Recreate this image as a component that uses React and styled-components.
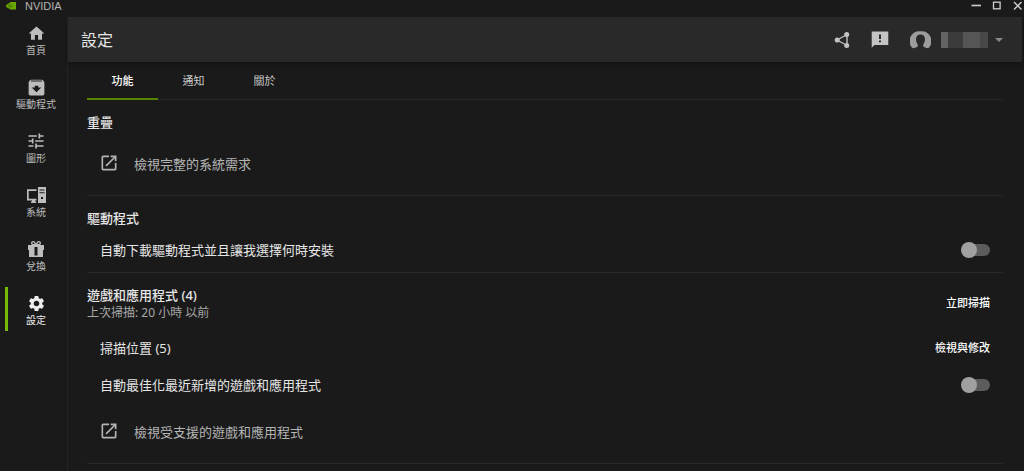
import React from "react";
import styled, { createGlobalStyle } from "styled-components";
import { MdArchive, MdHome, MdOpenInNew, MdSettings, MdTune } from "react-icons/md";

const GlobalStyle = createGlobalStyle`
    * {
        box-sizing: border-box;
    }
    body {
        margin: 0;
        background: #1a1a1a;
        color: #e6e6e6;
        font-family: "Noto Sans", "Noto Sans CJK TC", sans-serif;
        font-size: 13px;
    }
    button {
        border: 0;
        padding: 0;
        background: none;
        color: inherit;
        font: inherit;
        cursor: pointer;
    }
    h1, h2, p {
        margin: 0;
    }
    svg {
        display: block;
        flex: none;
    }
`;

const menuItems = [
    { id: "home", label: "首頁", icon: <MdHome size={19} /> },
    { id: "drivers", label: "驅動程式", icon: <MdArchive size={21} /> },
    { id: "graphics", label: "圖形", icon: <MdTune size={20} /> },
    { id: "system", label: "系統", icon: <SystemIcon /> },
    { id: "redeem", label: "兌換", icon: <GiftIcon /> },
    { id: "settings", label: "設定", icon: <MdSettings size={19} /> },
];

const tabs = ["功能", "通知", "關於"];

export default function App() {
    const [page, setPage] = React.useState("settings");
    const [tab, setTab] = React.useState(tabs[0]);

    return (
        <>
            <GlobalStyle />
            <TitleBar />
            <StyledBody>
                <Menu page={page} setPage={setPage} />
                <StyledMain>
                    <Header />
                    <StyledTabs role="tablist">
                        {tabs.map((name) => (
                            <StyledTab
                                key={name}
                                role="tab"
                                aria-selected={name === tab}
                                $active={name === tab}
                                onClick={() => setTab(name)}
                            >
                                {name}
                            </StyledTab>
                        ))}
                    </StyledTabs>
                    <Settings />
                </StyledMain>
            </StyledBody>
        </>
    );
}

const StyledTitleBar = styled.div`
    display: flex;
    align-items: center;
    justify-content: space-between;
    height: 17px;
    padding: 0 1px 5px 5px;

    .brand {
        display: flex;
        align-items: center;
        gap: 8px;
        color: #b4b4b4;
        font-family: "Liberation Sans", sans-serif;
        font-size: 11px;
        line-height: 12px;
    }
    .window-buttons {
        display: flex;
        gap: 11px;
        color: #cfcfcf;
    }
`;

function TitleBar() {
    return (
        <StyledTitleBar>
            <div className="brand">
                <LogoIcon />
                NVIDIA
            </div>
            <div className="window-buttons">
                <button aria-label="最小化">
                    <svg width="10" height="10" viewBox="0 0 10 10" fill="none" stroke="currentColor">
                        <path d="M0.500 4.500h9.500" strokeWidth="1.6" />
                    </svg>
                </button>
                <button aria-label="最大化">
                    <svg width="10" height="10" viewBox="0 0 10 10" fill="none" stroke="currentColor">
                        <rect x="1.5" y="1.2" width="6.600" height="6.600" strokeWidth="1.3" />
                    </svg>
                </button>
                <button aria-label="關閉">
                    <svg width="10" height="10" viewBox="0 0 10 10" fill="none" stroke="currentColor">
                        <path d="M1 1l7.500 7.500M8.500 1l-7.500 7.500" strokeWidth="1.4" />
                    </svg>
                </button>
            </div>
        </StyledTitleBar>
    );
}

const StyledBody = styled.div`
    display: flex;
    min-height: calc(100vh - 17px);
`;

const StyledMenu = styled.nav`
    display: flex;
    flex-direction: column;
    flex: none;
    gap: 10px;
    width: 68px;
    padding-left: 5px;
    border-right: 1px solid #242424;
`;

const StyledMenuItem = styled.button`
    display: flex;
    flex-direction: column;
    align-items: center;
    height: 44px;
    padding-top: 6px;
    border: solid transparent;
    border-width: 0 3px;
    border-left-color: ${({ $active }) => ($active ? "#76b900" : "transparent")};
    color: ${({ $active }) => ($active ? "#eeeeee" : "#bdbdbd")};
    font-size: 10px;
    line-height: 14px;
    white-space: nowrap;

    .icon {
        display: flex;
        align-items: center;
        justify-content: center;
        height: 20px;
    }
`;

function Menu({ page, setPage }) {
    return (
        <StyledMenu>
            {menuItems.map((item) => (
                <StyledMenuItem key={item.id} $active={item.id === page} onClick={() => setPage(item.id)}>
                    <span className="icon">{item.icon}</span>
                    {item.label}
                </StyledMenuItem>
            ))}
        </StyledMenu>
    );
}

const StyledMain = styled.main`
    flex: 1;
    min-width: 0;
`;

const StyledHeader = styled.header`
    display: flex;
    align-items: center;
    justify-content: space-between;
    height: 45px;
    margin-right: 2px;
    padding: 0 19px 0 13px;
    background: #292929;
    box-shadow: 0 2px 4px rgba(0, 0, 0, 0.35);

    h1 {
        font-size: 16px;
        font-weight: 400;
        line-height: 24px;
    }
    .actions {
        display: flex;
        align-items: center;
        gap: 20px;
        color: #c4c4c4;
    }
    .account {
        display: flex;
        align-items: center;
    }
`;

const StyledHiddenName = styled.span`
    display: flex;
    height: 16px;
    margin: 0 7px 0 10px;

    i:nth-child(1) {
        width: 7px;
        background: #636363;
    }
    i:nth-child(2) {
        width: 15px;
        background: #3b3b3b;
    }
    i:nth-child(3) {
        width: 17px;
        background: #555555;
    }
    i:nth-child(4) {
        width: 8px;
        background: #484848;
    }
`;

function Header() {
    return (
        <StyledHeader>
            <h1>設定</h1>
            <div className="actions">
                <button aria-label="分享">
                    <ShareIcon />
                </button>
                <button aria-label="意見反應">
                    <FeedbackIcon />
                </button>
                <button className="account" aria-label="帳戶">
                    <AvatarIcon />
                    <StyledHiddenName>
                        <i /><i /><i /><i />
                    </StyledHiddenName>
                    <svg width="8" height="16" viewBox="0 0 8 16">
                        <path d="M0 6h8l-4 4z" fill="#8a8a8a" />
                    </svg>
                </button>
            </div>
        </StyledHeader>
    );
}

const StyledTabs = styled.div`
    display: flex;
    height: 38px;
    margin: 0 21px 0 19px;
    border-bottom: 1px solid #292929;
`;

const StyledTab = styled.button`
    width: 71px;
    height: 38px;
    border-bottom: 2px solid ${({ $active }) => ($active ? "#568600" : "transparent")};
    color: ${({ $active }) => ($active ? "#ffffff" : "#c8c8c8")};
    font-size: 11px;
    font-weight: ${({ $active }) => ($active ? 500 : 400)};
`;

const StyledSection = styled.section`
    margin: 0 21px 0 19px;
    padding: 12px 0 4px;
    border-bottom: 1px solid #292929;
`;

const StyledSectionTop = styled.div`
    display: flex;
    align-items: center;
    justify-content: space-between;
    margin-bottom: ${({ $spaced }) => ($spaced ? "8px" : "3px")};
    padding-right: 13px;

    h2 {
        font-size: 13px;
        font-weight: 500;
        line-height: 20px;
    }
    p {
        color: #a6a6a6;
        font-size: 12px;
        line-height: 16px;
    }
`;

const StyledRow = styled.div`
    display: flex;
    align-items: center;
    justify-content: space-between;
    height: 37px;
    padding: 0 13px;
`;

const StyledTextButton = styled.button`
    color: #ffffff;
    font-size: 11px;
    font-weight: 500;
    line-height: 16px;
`;

const StyledLink = styled.a`
    display: flex;
    align-items: center;
    gap: 15px;
    height: 56px;
    padding-left: 12px;
    color: #b4b4b4;
    text-decoration: none;
`;

const StyledSwitch = styled.input`
    display: flex;
    align-items: center;
    appearance: none;
    width: 28px;
    height: 12px;
    margin: 0;
    border-radius: 6px;
    background: ${({ checked }) => (checked ? "#3f6300" : "#5c5c5c")};
    cursor: pointer;

    &::before {
        content: "";
        flex: none;
        width: 16px;
        height: 16px;
        margin-left: ${({ checked }) => (checked ? "13px" : "-1px")};
        border-radius: 50%;
        background: ${({ checked }) => (checked ? "#76b900" : "#a0a0a0")};
    }
`;

function SwitchRow({ id, label }) {
    const [checked, setChecked] = React.useState(false);

    return (
        <StyledRow>
            <label htmlFor={id}>{label}</label>
            <StyledSwitch
                id={id}
                type="checkbox"
                role="switch"
                checked={checked}
                onChange={(e) => setChecked(e.target.checked)}
            />
        </StyledRow>
    );
}

function ExternalLink({ children }) {
    return (
        <StyledLink href="#">
            <MdOpenInNew size={20} />
            {children}
        </StyledLink>
    );
}

function Settings() {
    return (
        <>
            <StyledSection>
                <StyledSectionTop>
                    <h2>重疊</h2>
                </StyledSectionTop>
                <ExternalLink>檢視完整的系統需求</ExternalLink>
            </StyledSection>

            <StyledSection>
                <StyledSectionTop>
                    <h2>驅動程式</h2>
                </StyledSectionTop>
                <SwitchRow id="auto-download" label="自動下載驅動程式並且讓我選擇何時安裝" />
            </StyledSection>

            <StyledSection>
                <StyledSectionTop $spaced>
                    <div>
                        <h2>遊戲和應用程式 (4)</h2>
                        <p>上次掃描: 20 小時 以前</p>
                    </div>
                    <StyledTextButton>立即掃描</StyledTextButton>
                </StyledSectionTop>
                <StyledRow>
                    <span>掃描位置 (5)</span>
                    <StyledTextButton>檢視與修改</StyledTextButton>
                </StyledRow>
                <SwitchRow id="auto-optimize" label="自動最佳化最近新增的遊戲和應用程式" />
                <ExternalLink>檢視受支援的遊戲和應用程式</ExternalLink>
            </StyledSection>
        </>
    );
}

function LogoIcon() {
    return (
        <svg width="12" height="8" viewBox="0 0 12 8">
            <path d="M0.800 4C2 2 3.500 1.200 5 1V0h6v7.600H5V6.800C3.400 6.600 1.800 5.800 0.800 4z" fill="#6aa800" />
            <path d="M2.600 4c1.400-1.600 3.600-1.600 5 0-1.400 1.400-3.400 1.400-4.200.4" fill="none" stroke="#3c6200" strokeWidth="0.8" />
        </svg>
    );
}

function SystemIcon() {
    return (
        <svg width="20" height="20" viewBox="0 0 20 20" fill="currentColor">
            <path d="M1 4.300h9.500v1.700H2.700v7.800h7.800v1.700H9.200v1h1V18H5v-1.500h1v-1H1z" />
            <path
                fillRule="evenodd"
                d="M12 2h8v16h-8zM13.500 4.400v1h5v-1zM13.500 7.200v1h5v-1zM15 12v2h2v-2z"
            />
        </svg>
    );
}

function GiftIcon() {
    return (
        <svg width="18" height="18" viewBox="0 0 18 18" fill="currentColor">
            <path
                d="M9 4.800H6.200a1.600 1.600 0 1 1 1.600-2L9 4.800l1.200-2a1.600 1.600 0 1 1 1.600 2z"
                fill="none"
                stroke="currentColor"
                strokeWidth="1.4"
            />
            <path d="M1 5h16v5h-1v7H2v-7H1zM7.500 7v8.500h3V7z" fillRule="evenodd" />
        </svg>
    );
}

function ShareIcon() {
    return (
        <svg width="16" height="18" viewBox="0 0 16 18" fill="currentColor">
            <path d="M3 9l10-5.500M3 9l10 5.500M13 3.500v11" fill="none" stroke="currentColor" strokeWidth="1.4" />
            <circle cx="3.200" cy="9" r="2.500" />
            <circle cx="12.700" cy="3.500" r="2.500" />
            <circle cx="12.700" cy="14.500" r="2.500" />
        </svg>
    );
}

function FeedbackIcon() {
    return (
        <svg width="20" height="20" viewBox="0 0 20 20" fill="currentColor">
            <path fillRule="evenodd" d="M1.700 1.500h16.600V15H4.500l-2.800 2.800zM9 4.500v4.600h2V4.500zM9 10.500v1.800h2v-1.800z" />
        </svg>
    );
}

function AvatarIcon() {
    return (
        <svg width="21" height="18" viewBox="0 0 21 18">
            <path
                d="M10.500 0.300a10 9.800 0 0 0-7.800 16.900c2.200-.3 4.300-1 5-2 .4-.8.200-1.500-.3-2.200C6.400 11.500 6 9.800 6 8c0-2.800 1.800-4.600 4.500-4.600S15 5.200 15 8c0 1.800-.4 3.500-1.400 5-.5.700-.7 1.400-.3 2.200.7 1 2.800 1.700 5 2A10 9.800 0 0 0 10.500.3z"
                fill="#9c9c9c"
            />
        </svg>
    );
}
